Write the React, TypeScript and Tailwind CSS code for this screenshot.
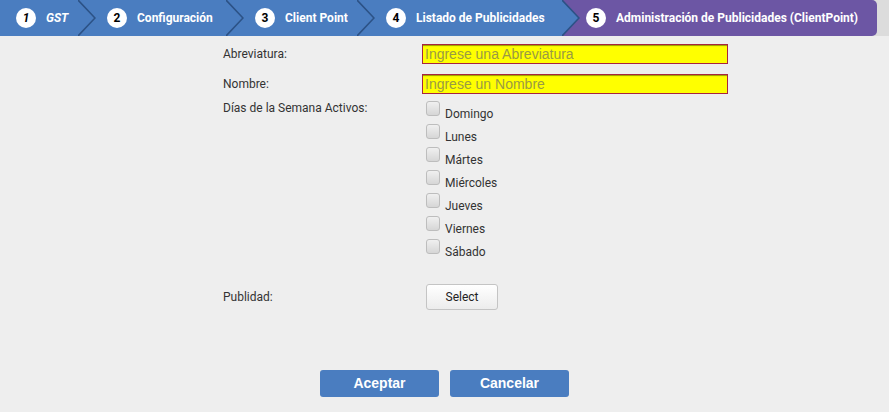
import { useState } from 'react';

const BLUE = '#4a7dc0';
const PURPLE = '#6c56a4';

type Step = { n: string; label: string; w: string; italic?: boolean };

const steps: Step[] = [
  { n: '1', label: 'GST', w: 'w-[78px]', italic: true },
  { n: '2', label: 'Configuración', w: 'w-[130px]' },
  { n: '3', label: 'Client Point', w: 'w-[113px]' },
  { n: '4', label: 'Listado de Publicidades', w: 'w-[187px]' },
];

const dias = ['Domingo', 'Lunes', 'Mártes', 'Miércoles', 'Jueves', 'Viernes', 'Sábado'];

function Chevron({ next }: { next: string }) {
  // arrow tip of the previous step over the colour of the next one
  return (
    <svg width="18" height="36" viewBox="0 0 18 36" className="block shrink-0" style={{ background: next }}>
      <polygon points="0,0 17,18 0,36" fill={BLUE} />
      <polyline points="0,0 17,18 0,36" fill="none" stroke="#2c5286" strokeWidth="1.6" />
    </svg>
  );
}

function Circle({ n, italic }: { n: string; italic?: boolean }) {
  return (
    <span
      className={`flex h-5 w-5 shrink-0 items-center justify-center rounded-full bg-white text-[12px] font-bold text-black ${italic ? 'italic' : ''}`}
    >
      {n}
    </span>
  );
}

function Breadcrumb() {
  return (
    <div className="flex h-9 bg-[#dcdcdc] font-['Roboto',sans-serif]">
      {steps.map((s, i) => (
        <div key={s.n} className="flex">
          <div
            className={`flex ${s.w} items-center gap-[10px] bg-[#4a7dc0] ${i === 0 ? 'pl-4' : 'pl-[11px]'}`}
          >
            <Circle n={s.n} italic={s.italic} />
            <span className={`text-[12px] font-bold text-white whitespace-nowrap ${s.italic ? 'italic' : ''}`}>
              {s.label}
            </span>
          </div>
          <Chevron next={i === steps.length - 1 ? PURPLE : BLUE} />
        </div>
      ))}
      <div className="flex w-[297px] items-center gap-[10px] rounded-r-[5px] bg-[#6c56a4] pl-[6px]">
        <Circle n="5" />
        <span className="text-[12px] font-bold text-white whitespace-nowrap">
          Administración de Publicidades (ClientPoint)
        </span>
      </div>
    </div>
  );
}

function Checkbox({ checked, onClick }: { checked: boolean; onClick: () => void }) {
  return (
    <button
      type="button"
      onClick={onClick}
      className="flex h-[15px] w-[14px] shrink-0 items-center justify-center rounded-[3px] border border-[#bdbdbd] bg-gradient-to-b from-[#f0f0f0] to-[#d6d6d6] text-[10px] leading-none text-[#333]"
    >
      {checked ? '✓' : ''}
    </button>
  );
}

export default function App() {
  const [marcados, setMarcados] = useState<Record<string, boolean>>({});

  const toggle = (d: string) => setMarcados((m) => ({ ...m, [d]: !m[d] }));

  return (
    <div className="h-[412px] w-[889px] overflow-hidden bg-[#eeeeee] font-['Roboto',sans-serif] text-[12px] text-[#333]">
      <Breadcrumb />

      <div className="ml-[223px] mt-2 grid w-[506px] grid-cols-[199px_1fr]">
        <label className="flex h-5 items-center">Abreviatura:</label>
        <input
          placeholder="Ingrese una Abreviatura"
          className="h-5 w-[306px] border border-[#a8243f] bg-[#ffff00] px-[2px] font-['Liberation_Sans',Arial,sans-serif] text-[14px] leading-none shadow-[inset_0_2px_1px_-1px_rgba(0,0,0,0.4)] outline-none placeholder:text-[#9a9a44]"
        />

        <label className="mt-[10px] flex h-5 items-center">Nombre:</label>
        <input
          placeholder="Ingrese un Nombre"
          className="mt-[10px] h-5 w-[306px] border border-[#a8243f] bg-[#ffff00] px-[2px] font-['Liberation_Sans',Arial,sans-serif] text-[14px] leading-none shadow-[inset_0_2px_1px_-1px_rgba(0,0,0,0.4)] outline-none placeholder:text-[#9a9a44]"
        />

        <label className="mt-[6px] leading-4">Días de la Semana Activos:</label>
        <div className="mt-[7px] flex flex-col pl-[4px]">
          {dias.map((d) => (
            <div key={d} className="flex h-[23px] items-start gap-[5px]">
              <Checkbox checked={!!marcados[d]} onClick={() => toggle(d)} />
              <span className="mt-[5px] leading-4">{d}</span>
            </div>
          ))}
        </div>

        <label className="mt-[22px] flex h-[26px] items-center">Publidad:</label>
        <div className="mt-[22px] pl-[4px]">
          <button
            type="button"
            className="h-[26px] w-[72px] rounded-[3px] border border-[#c4c4c4] bg-gradient-to-b from-white to-[#ececec] text-[12px] text-[#222]"
          >
            Select
          </button>
        </div>
      </div>

      <div className="mt-[60px] flex justify-start gap-[11px] pl-[320px] font-['Liberation_Sans',Arial,sans-serif]">
        <button type="button" className="h-[27px] w-[119px] rounded-[3px] bg-[#4a7dc0] text-[14px] font-bold text-white">
          Aceptar
        </button>
        <button type="button" className="h-[27px] w-[119px] rounded-[3px] bg-[#4a7dc0] text-[14px] font-bold text-white">
          Cancelar
        </button>
      </div>
    </div>
  );
}
